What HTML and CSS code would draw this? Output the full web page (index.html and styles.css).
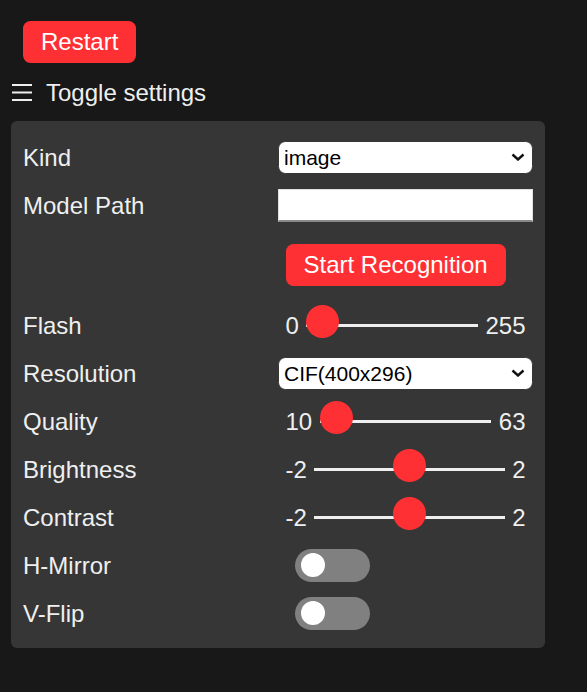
FILE: index.html
```html
<!DOCTYPE html>
<html>
<head>
<meta charset="utf-8">
<link rel="stylesheet" href="styles.css">
</head>
<body>
  <div class="top">
    <button class="btn">Restart</button>
  </div>
  <div class="toggle">
    <svg class="burger" width="20" height="18" viewBox="0 0 20 18"><rect x="0" y="0" width="20" height="2" fill="#efefef"/><rect x="0" y="7.5" width="20" height="2" fill="#efefef"/><rect x="0" y="15" width="20" height="2" fill="#efefef"/></svg>
    <span>Toggle settings</span>
  </div>
  <div class="menu">
    <div class="group">
      <label class="lbl">Kind</label>
      <div class="ctl">
        <div class="sel">
          <select><option>image</option></select>
          <svg class="chev" width="14" height="8" viewBox="0 0 14 8"><path d="M1.5 1.5 L7 6.5 L12.5 1.5" fill="none" stroke="#111" stroke-width="2.4"/></svg>
        </div>
      </div>
    </div>
    <div class="group">
      <label class="lbl">Model Path</label>
      <div class="ctl"><input class="txt" type="text"></div>
    </div>
    <div class="group">
      <label class="lbl"></label>
      <div class="ctl"><button class="btn btn-inline">Start Recognition</button></div>
    </div>
    <div class="group">
      <label class="lbl">Flash</label>
      <div class="ctl range-wrap"><span class="rv">0</span><input type="range" min="0" max="255" value="0"><span class="rv">255</span></div>
    </div>
    <div class="group">
      <label class="lbl">Resolution</label>
      <div class="ctl">
        <div class="sel">
          <select><option>CIF(400x296)</option></select>
          <svg class="chev" width="14" height="8" viewBox="0 0 14 8"><path d="M1.5 1.5 L7 6.5 L12.5 1.5" fill="none" stroke="#111" stroke-width="2.4"/></svg>
        </div>
      </div>
    </div>
    <div class="group">
      <label class="lbl">Quality</label>
      <div class="ctl range-wrap"><span class="rv">10</span><input type="range" min="10" max="63" value="10"><span class="rv">63</span></div>
    </div>
    <div class="group">
      <label class="lbl">Brightness</label>
      <div class="ctl range-wrap"><span class="rv">-2</span><input type="range" min="-2" max="2" value="0"><span class="rv">2</span></div>
    </div>
    <div class="group">
      <label class="lbl">Contrast</label>
      <div class="ctl range-wrap"><span class="rv">-2</span><input type="range" min="-2" max="2" value="0"><span class="rv">2</span></div>
    </div>
    <div class="group">
      <label class="lbl">H-Mirror</label>
      <div class="ctl"><span class="switch"><span class="knob"></span></span></div>
    </div>
    <div class="group">
      <label class="lbl">V-Flip</label>
      <div class="ctl"><span class="switch"><span class="knob"></span></span></div>
    </div>
  </div>
</body>
</html>
```

FILE: styles.css
```css
html, body {
  margin: 0;
  padding: 0;
}
body {
  background: #181818;
  color: #efefef;
  font-family: "Liberation Sans", Arial, sans-serif;
  font-size: 24px;
  height: 692px;
}
.top {
  padding: 21px 0 0 23px;
}
.btn {
  display: block;
  border: 0;
  height: 42px;
  line-height: 42px;
  padding: 0 18px;
  border-radius: 7.5px;
  background: #ff3034;
  color: #fff;
  font-family: "Liberation Sans", Arial, sans-serif;
  font-size: 24px;
}
.btn-inline {
  margin: 7.5px;
}
.toggle {
  display: flex;
  align-items: center;
  gap: 14px;
  margin: 13.5px 0 0 12px;
  height: 33px;
}
.burger {
  display: block;
}
.menu {
  display: flex;
  flex-direction: column;
  margin: 11.5px 0 0 11px;
  width: 510px;
  padding: 12px 12px 10.5px;
  border-radius: 6px;
  background: #363636;
}
.group {
  display: flex;
  align-items: center;
  min-height: 33px;
  line-height: 33px;
  margin: 7.5px 0;
}
.lbl {
  flex: 0 0 255px;
}
.ctl {
  flex: 1;
  display: flex;
  align-items: center;
}
.sel {
  position: relative;
  width: 100%;
}
.sel select {
  -webkit-appearance: none;
  appearance: none;
  display: block;
  width: 100%;
  height: 33px;
  box-sizing: border-box;
  border: 1.5px solid #363636;
  border-radius: 7.5px;
  background: #fff;
  color: #000;
  font-family: "Liberation Sans", Arial, sans-serif;
  font-size: 21px;
  padding: 0 0 0 5px;
  outline: 0;
}
.chev {
  position: absolute;
  right: 8px;
  top: 12px;
  pointer-events: none;
}
.txt {
  display: block;
  width: 100%;
  height: 33px;
  box-sizing: border-box;
  border: 1px solid #e0e0e0;
  border-bottom: 2px solid #8a8a8a;
  background: #fff;
  margin: 0;
  padding: 0 4px;
  font-size: 20px;
}
.rv {
  padding: 0 7.5px;
}
.range-wrap input[type=range] {
  -webkit-appearance: none;
  appearance: none;
  flex: 1;
  min-width: 0;
  height: 33px;
  margin: 0;
  background: transparent;
}
.range-wrap input[type=range]::-webkit-slider-runnable-track {
  height: 3px;
  background: #efefef;
  border: 0;
}
.range-wrap input[type=range]::-webkit-slider-thumb {
  -webkit-appearance: none;
  width: 33px;
  height: 33px;
  border-radius: 50%;
  background: #ff3034;
  border: 0;
  margin-top: -19px;
}
.switch {
  display: flex;
  align-items: center;
  margin-left: 17px;
  width: 75px;
  height: 33px;
  border-radius: 16.5px;
  background: #808080;
}
.knob {
  display: block;
  width: 24px;
  height: 24px;
  margin-left: 6px;
  border-radius: 50%;
  background: #fff;
}
```
